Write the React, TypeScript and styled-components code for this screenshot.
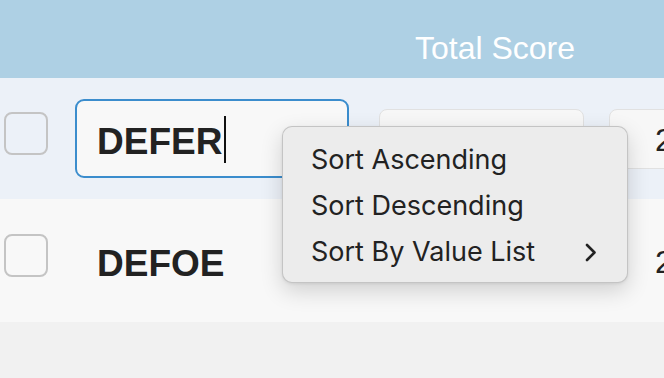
import React from "react";
import styled, { createGlobalStyle } from "styled-components";

const Global = createGlobalStyle`
  html, body {
    margin: 0;
    padding: 0;
    background: #f1f1f1;
    width: 664px;
    height: 378px;
    overflow: hidden;
  }
  * { box-sizing: border-box; }
`;

const Page = styled.div`
  position: relative;
  width: 664px;
  height: 378px;
  overflow: hidden;
  background: #f1f1f1;
  font-family: "Liberation Sans", Arial, sans-serif;
  display: flex;
  flex-direction: column;
`;

const Header = styled.div`
  height: 78px;
  flex: none;
  background: #aed0e4;
  display: flex;
  padding-left: 379px;
  padding-top: 30px;
`;

const HeaderCell = styled.div`
  width: 232px;
  flex: none;
  text-align: center;
  color: #ffffff;
  font-size: 32px;
  line-height: 36px;
  white-space: nowrap;
`;

const Row = styled.div<{ $bg: string; $h: number }>`
  height: ${(p) => p.$h}px;
  flex: none;
  background: ${(p) => p.$bg};
  display: flex;
  align-items: center;
  padding-left: 4px;
`;

const Check = styled.div`
  width: 44px;
  height: 43px;
  flex: none;
  border: 2px solid #c4c4c4;
  border-radius: 8px;
  margin-bottom: 10px;
`;

const NameField = styled.div<{ $active?: boolean }>`
  width: 274px;
  height: 79px;
  flex: none;
  margin-left: 27px;
  border-radius: 9px;
  border: 2px solid ${(p) => (p.$active ? "#3b8dcd" : "transparent")};
  background: ${(p) => (p.$active ? "#f8f8f8" : "transparent")};
  display: flex;
  align-items: center;
  padding-left: 20px;
  padding-top: 5px;
  font-weight: 700;
  font-size: 37px;
  line-height: 37px;
  color: #222222;
`;

const Caret = styled.span`
  display: inline-block;
  width: 1.5px;
  height: 47px;
  background: #111111;
  margin-left: 2px;
  margin-bottom: 3px;
`;

const Field = styled.div<{ $visible?: boolean; $w: number; $gap: number }>`
  width: ${(p) => p.$w}px;
  height: 60px;
  flex: none;
  margin-left: ${(p) => p.$gap}px;
  border-radius: 8px;
  border: 1px solid ${(p) => (p.$visible ? "#e1e1e1" : "transparent")};
  background: ${(p) => (p.$visible ? "#f7f7f7" : "transparent")};
  display: flex;
  align-items: center;
  padding-left: 45px;
  padding-top: 3px;
  font-size: 32px;
  line-height: 32px;
  color: #222222;
`;

const Menu = styled.div`
  position: absolute;
  left: 282px;
  top: 126px;
  width: 346px;
  height: 157px;
  background: #ececec;
  border: 1px solid rgba(0, 0, 0, 0.17);
  border-radius: 10px;
  box-shadow: 0 8px 22px rgba(0, 0, 0, 0.16), 0 1px 3px rgba(0, 0, 0, 0.08);
  padding-top: 10px;
  display: flex;
  flex-direction: column;
`;

const MenuItem = styled.div`
  height: 46px;
  display: flex;
  align-items: center;
  justify-content: space-between;
  padding-left: 28px;
  padding-right: 30px;
  font-family: Inter, "Liberation Sans", sans-serif;
  font-size: 27px;
  line-height: 46px;
  color: #222222;
  white-space: nowrap;
`;

const Chevron = () => (
  <svg width="12" height="19" viewBox="0 0 12 19">
    <polyline
      points="2,2 9.5,9.5 2,17"
      fill="none"
      stroke="#222"
      strokeWidth="2.6"
      strokeLinecap="round"
      strokeLinejoin="round"
    />
  </svg>
);

export default function App() {
  return (
    <Page>
      <Global />
      <Header>
        <HeaderCell>Total Score</HeaderCell>
      </Header>
      <Row $bg="#ecf1f8" $h={121}>
        <Check />
        <NameField $active>
          DEFER
          <Caret />
        </NameField>
        <Field $visible $w={205} $gap={30} />
        <Field $visible $w={80} $gap={25}>
          2
        </Field>
      </Row>
      <Row $bg="#f8f8f8" $h={123}>
        <Check />
        <NameField>DEFOE</NameField>
        <Field $w={205} $gap={30} />
        <Field $w={80} $gap={25}>
          2
        </Field>
      </Row>
      <Menu>
        <MenuItem>Sort Ascending</MenuItem>
        <MenuItem>Sort Descending</MenuItem>
        <MenuItem>
          Sort By Value List
          <Chevron />
        </MenuItem>
      </Menu>
    </Page>
  );
}
